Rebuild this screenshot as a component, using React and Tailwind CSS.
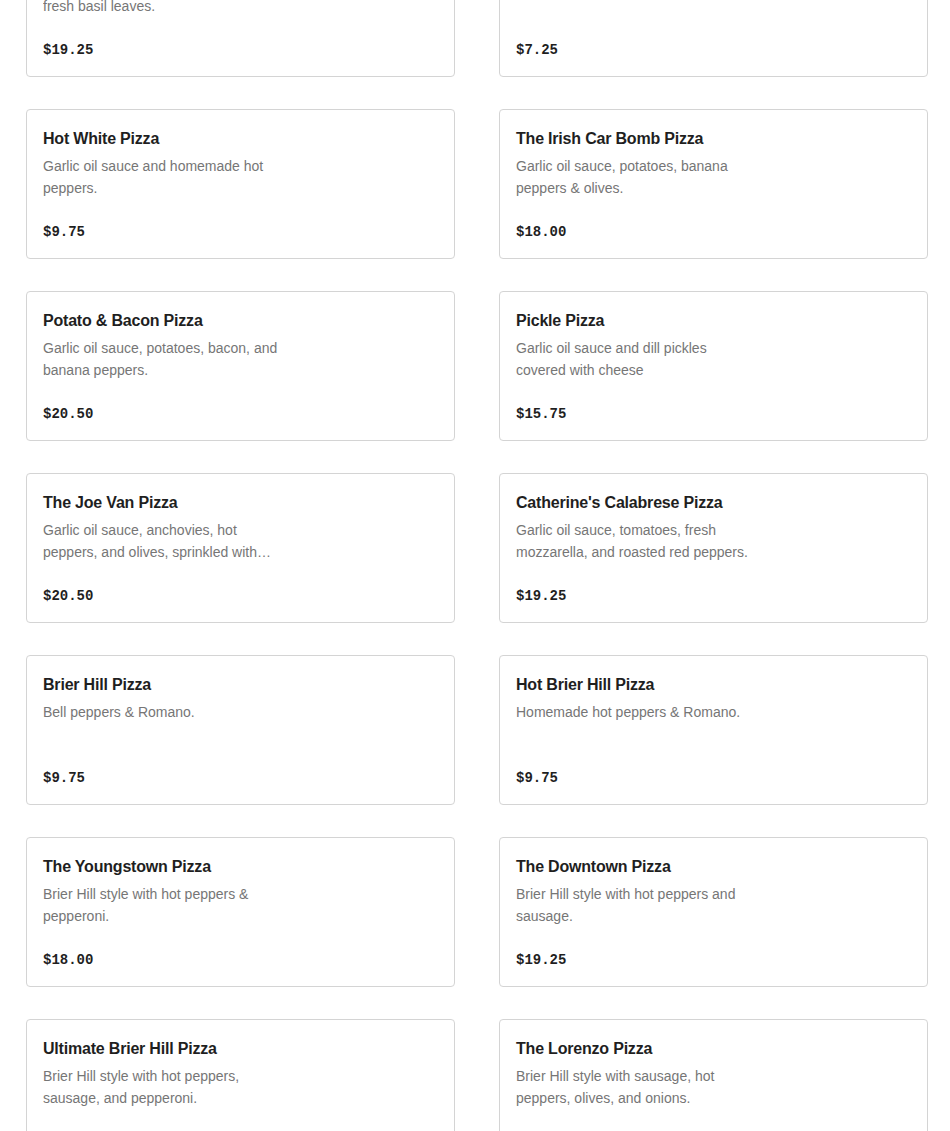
import React from 'react';

const items = [
  { name: 'Margherita Pizza', desc: 'Tomato sauce, fresh mozzarella, and fresh basil leaves.', price: '$19.25' },
  { name: 'Cheese Pizza', desc: 'Classic red sauce and cheese.', price: '$7.25' },
  { name: 'Hot White Pizza', desc: 'Garlic oil sauce and homemade hot peppers.', price: '$9.75' },
  { name: 'The Irish Car Bomb Pizza', desc: 'Garlic oil sauce, potatoes, banana peppers & olives.', price: '$18.00' },
  { name: 'Potato & Bacon Pizza', desc: 'Garlic oil sauce, potatoes, bacon, and banana peppers.', price: '$20.50' },
  { name: 'Pickle Pizza', desc: 'Garlic oil sauce and dill pickles covered with cheese', price: '$15.75' },
  { name: 'The Joe Van Pizza', desc: 'Garlic oil sauce, anchovies, hot peppers, and olives, sprinkled with Romano cheese.', price: '$20.50' },
  { name: "Catherine's Calabrese Pizza", desc: 'Garlic oil sauce, tomatoes, fresh mozzarella, and roasted red peppers.', price: '$19.25' },
  { name: 'Brier Hill Pizza', desc: 'Bell peppers & Romano.', price: '$9.75' },
  { name: 'Hot Brier Hill Pizza', desc: 'Homemade hot peppers & Romano.', price: '$9.75' },
  { name: 'The Youngstown Pizza', desc: 'Brier Hill style with hot peppers & pepperoni.', price: '$18.00' },
  { name: 'The Downtown Pizza', desc: 'Brier Hill style with hot peppers and sausage.', price: '$19.25' },
  { name: 'Ultimate Brier Hill Pizza', desc: 'Brier Hill style with hot peppers, sausage, and pepperoni.', price: '$22.75' },
  { name: 'The Lorenzo Pizza', desc: 'Brier Hill style with sausage, hot peppers, olives, and onions.', price: '$21.50' },
];

const MenuCard = ({ item }) => (
  <div className="h-[150px] flex flex-col border border-[#d4d4d4] rounded-[4px] bg-white px-4 pt-[17px] pb-4 cursor-pointer">
    <h3 className="text-[16px] leading-6 font-semibold text-[#1f1f1f] tracking-[-0.2px]">{item.name}</h3>
    <p className="mt-1 max-w-[240px] text-[14px] leading-[22px] text-[#767676] line-clamp-2">{item.desc}</p>
    <span className="mt-auto text-[14px] leading-5 font-bold text-[#1f1f1f] font-['Liberation_Mono',monospace]">
      {item.price}
    </span>
  </div>
);

export default function App() {
  return (
    <div className="h-[1131px] overflow-hidden bg-white font-['Liberation_Sans',Arial,sans-serif]">
      <div className="mt-[-73px] pl-[26px] grid grid-cols-[429px_429px] gap-x-[44px] gap-y-8">
        {items.map((item) => (
          <MenuCard key={item.name} item={item} />
        ))}
      </div>
    </div>
  );
}
